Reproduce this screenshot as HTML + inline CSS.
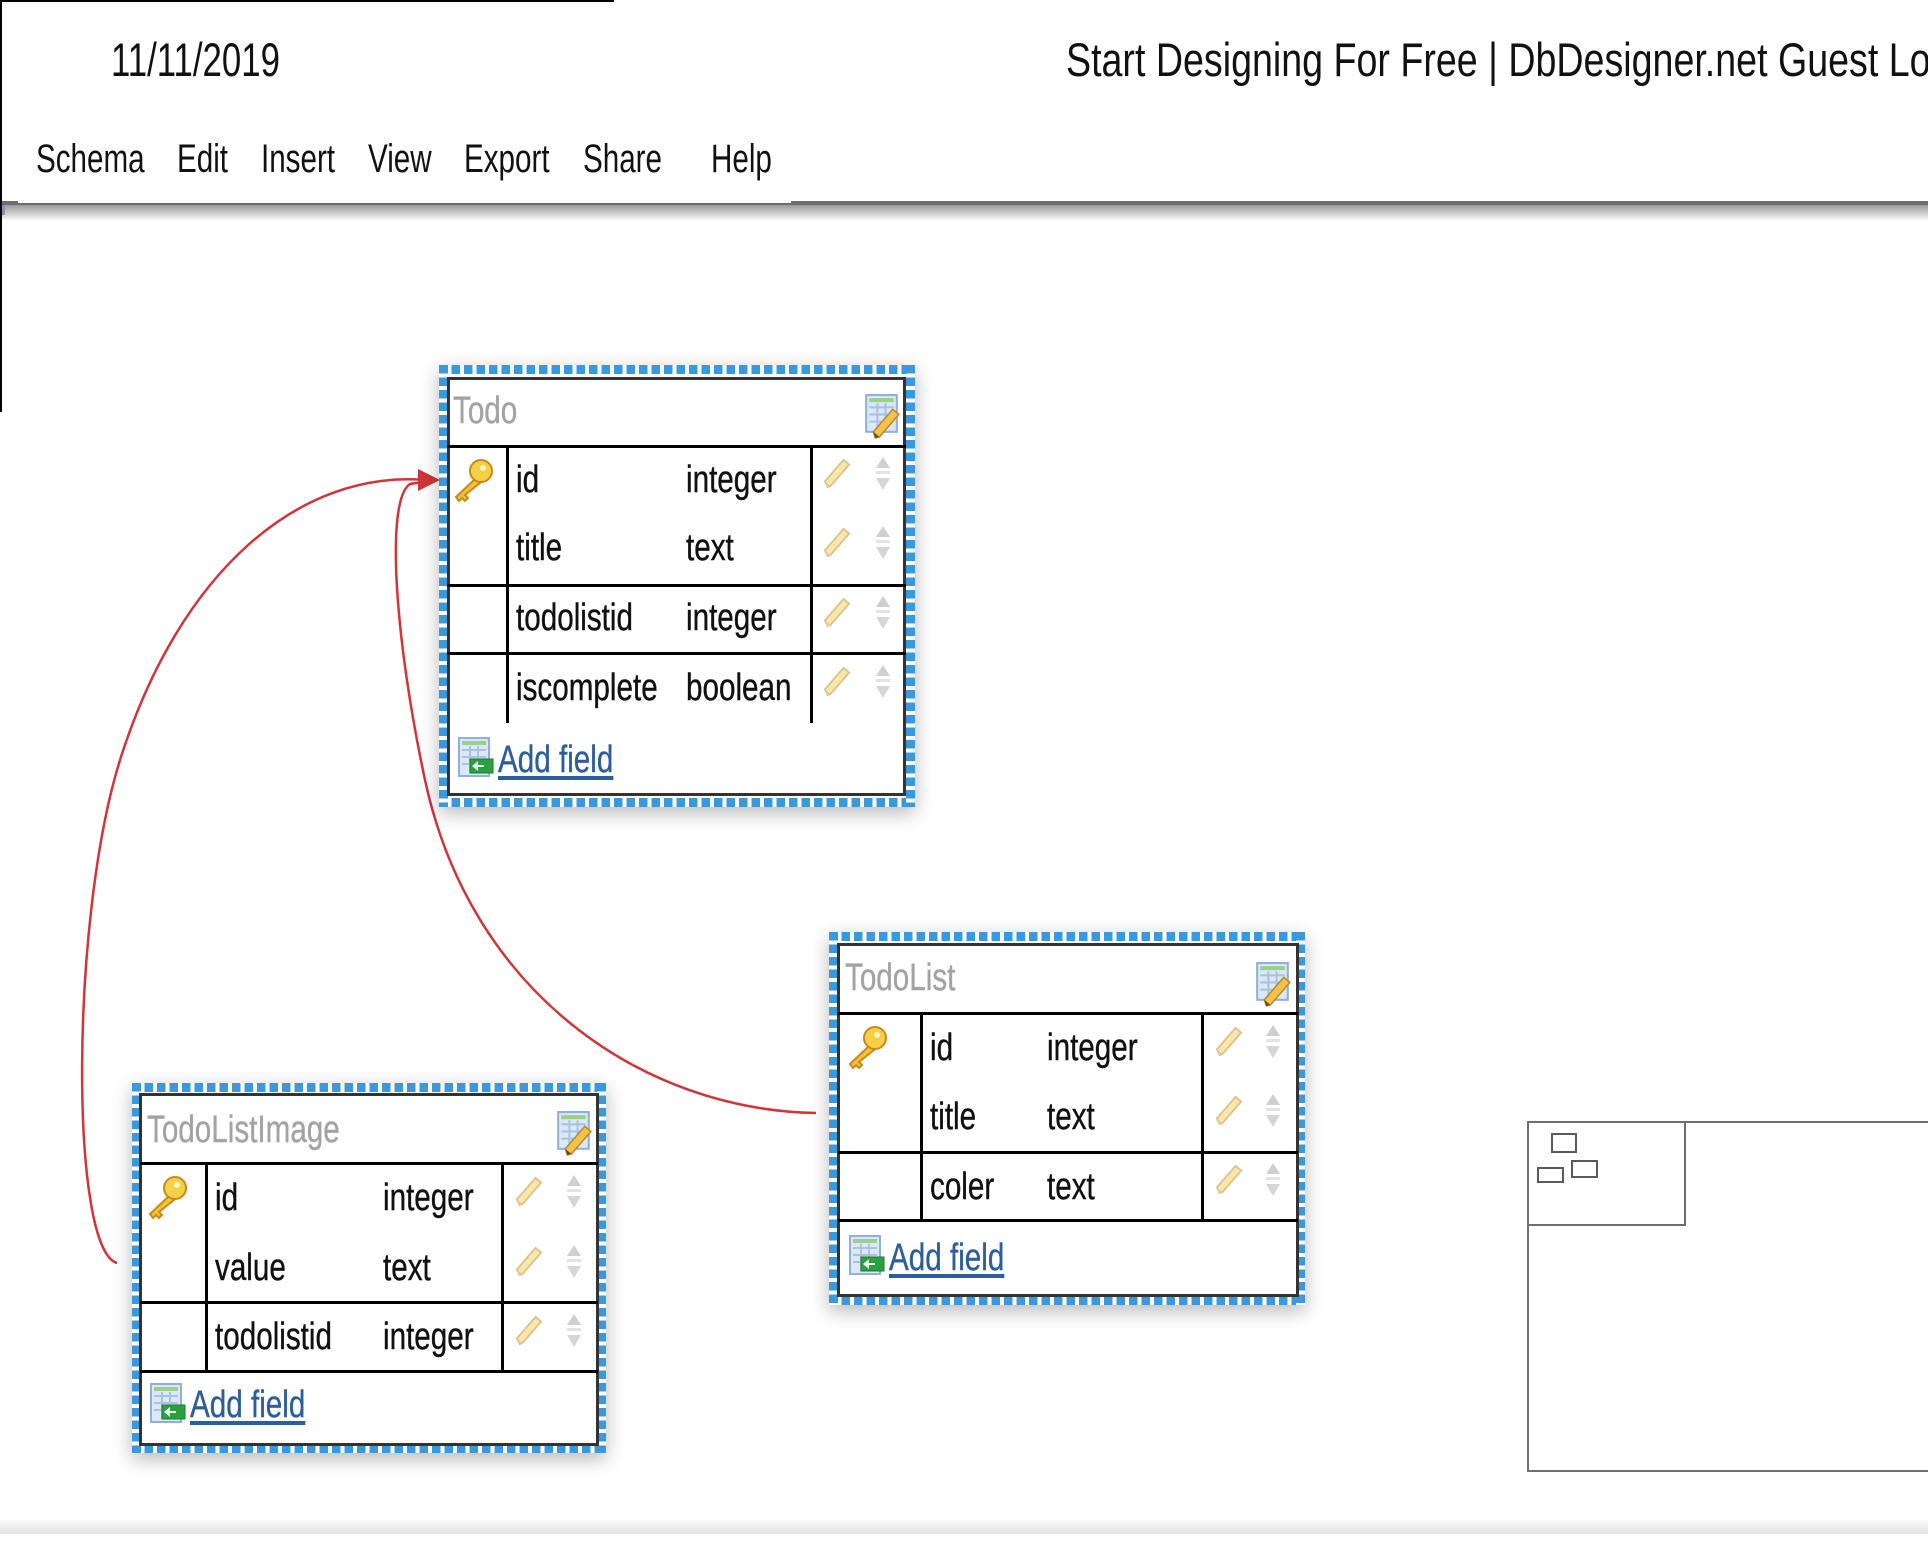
<!DOCTYPE html>
<html><head><meta charset="utf-8"><style>
*{margin:0;padding:0;box-sizing:border-box}
body{width:1928px;height:1552px;position:relative;overflow:hidden;background:#fff;font-family:"Liberation Sans",sans-serif}
.a{position:absolute}
.h{position:absolute;white-space:nowrap;color:#111;transform-origin:0 50%;transform:scaleX(.74)}
.t{position:absolute;white-space:nowrap;font-size:38px;line-height:60px;color:#111;transform-origin:0 50%;transform:scaleX(.78);-webkit-text-stroke:.4px #111}
.ti{color:#a3a3a3;-webkit-text-stroke:.4px #a3a3a3}
.af{color:#2d5e9c;-webkit-text-stroke:.4px #2d5e9c;text-decoration:underline;text-decoration-thickness:4px;text-underline-offset:4px}
.dash{position:absolute;box-shadow:0 6px 18px rgba(0,0,0,.28)}
.dash .s{position:absolute}
.inner{position:absolute;border:3px solid #333;background:#fff}
.ln{position:absolute;background:#000}
svg.i{position:absolute;overflow:visible}
</style></head><body>
<svg width="0" height="0" style="position:absolute">
<defs>
<symbol id="key" viewBox="0 0 40 50"><path d="M22 22 L3 40 L6 44 L9 41 L12 44 L15 41 L12 38 L27 26 Z" fill="#f1c232" stroke="#c98a1c" stroke-width="2"/><circle cx="28" cy="14" r="11" fill="#f5cf45" stroke="#c98a1c" stroke-width="2"/><circle cx="30" cy="11" r="3" fill="#fff6c8"/></symbol>
<symbol id="pen" viewBox="0 0 30 34"><path d="M5 32 L2 26 L22 3 L28 8 L8 31 Z" fill="#f8e7a8" stroke="#dcc38e" stroke-width="2"/><path d="M2 26 L5 32 L8 31" fill="#e9c8a0"/></symbol>
<symbol id="srt" viewBox="0 0 16 36"><path d="M8 1 L15 12 L1 12 Z" fill="#cfcfcf"/><rect x="1" y="15" width="14" height="3" fill="#e3e3e3"/><path d="M1 22 L15 22 L8 34 Z" fill="#d6d6d6"/></symbol>
<symbol id="ed" viewBox="0 0 34 46"><rect x="1" y="2" width="30" height="36" fill="#dbe8f7" stroke="#8fb0d8" stroke-width="2"/><rect x="4" y="5" width="24" height="4" fill="#9ccf8a"/><path d="M4 14 H28 M4 21 H28 M4 28 H28 M12 10 V36 M20 10 V36" stroke="#a9c2e2" stroke-width="2"/><path d="M10 44 L8 38 L27 16 L33 21 L14 43 Z" fill="#f2c24a" stroke="#b98a2c" stroke-width="1.5"/><path d="M8 38 L10 44 L14 43 Z" fill="#6b4a22"/></symbol>
<symbol id="add" viewBox="0 0 36 42"><rect x="1" y="1" width="30" height="38" fill="#dbe8f7" stroke="#8fb0d8" stroke-width="2"/><rect x="4" y="4" width="24" height="4" fill="#9ccf8a"/><path d="M4 13 H28 M4 20 H28 M4 27 H28 M12 9 V36 M20 9 V36" stroke="#a9c2e2" stroke-width="2"/><rect x="12" y="22" width="23" height="14" fill="#2aa040" stroke="#1d7a2e"/><path d="M14 29 L20 24 V34 Z M18 28 H26 V30 H18Z" fill="#e8ffe8"/></symbol>
</defs></svg>

<!-- header -->
<div class="a" style="left:0;top:201px;width:1928px;height:4px;background:#6e6e6e"></div>
<div class="a" style="left:0;top:205px;width:1928px;height:16px;background:linear-gradient(#9a9a9a,rgba(255,255,255,0))"></div>
<div class="a" style="left:18px;top:0;width:773px;height:203px;background:#fff"></div>
<div class="a" style="left:0;top:0;width:614px;height:2px;background:#000"></div>
<div class="a" style="left:0;top:0;width:2px;height:412px;background:#000"></div>
<div class="a" style="left:2px;top:205px;width:3px;height:10px;background:#8890b8"></div>
<div class="h" style="left:111px;top:36px;font-size:47px;line-height:47px">11/11/2019</div>
<div class="h" style="left:1066px;top:36px;font-size:47px;line-height:47px;transform:scaleX(.8)">Start Designing For Free | DbDesigner.net Guest Log</div>
<div class="h" style="left:36px;top:139px;font-size:40px;line-height:40px">Schema</div>
<div class="h" style="left:177px;top:139px;font-size:40px;line-height:40px">Edit</div>
<div class="h" style="left:261px;top:139px;font-size:40px;line-height:40px">Insert</div>
<div class="h" style="left:368px;top:139px;font-size:40px;line-height:40px">View</div>
<div class="h" style="left:464px;top:139px;font-size:40px;line-height:40px">Export</div>
<div class="h" style="left:583px;top:139px;font-size:40px;line-height:40px">Share</div>
<div class="h" style="left:711px;top:139px;font-size:40px;line-height:40px">Help</div>

<!-- relation lines -->
<svg class="a" style="left:0;top:0" width="1928" height="1552">
<path d="M117 1263 C70 1250 70 920 120 760 C180 570 300 470 425 480" fill="none" stroke="#d0353a" stroke-width="2.5"/>
<path d="M816 1113 C640 1110 470 990 425 780 C395 640 385 500 410 484 L428 481" fill="none" stroke="#d0353a" stroke-width="2.5"/>
<path d="M440 480 L418 469 L418 491 Z" fill="#d0353a"/>
</svg>

<!-- Todo -->
<div class="dash" style="left:439px;top:365px;width:476px;height:442px">
<div class="s" style="left:0;top:0;width:100%;height:9px;background:repeating-linear-gradient(90deg,#3a98dc 0 8.5px,#fff 8.5px 12.5px)"></div>
<div class="s" style="left:0;bottom:0;width:100%;height:9px;background:repeating-linear-gradient(90deg,#3a98dc 0 8.5px,#fff 8.5px 12.5px)"></div>
<div class="s" style="left:0;top:0;width:9px;height:100%;background:repeating-linear-gradient(180deg,#3a98dc 0 8.5px,#fff 8.5px 12.5px)"></div>
<div class="s" style="right:0;top:0;width:9px;height:100%;background:repeating-linear-gradient(180deg,#3a98dc 0 8.5px,#fff 8.5px 12.5px)"></div>
</div>
<div class="inner" style="left:447px;top:377px;width:459px;height:419px"></div>
<div class="ln" style="left:447px;top:445px;width:459px;height:3px"></div>
<div class="ln" style="left:506px;top:446px;width:3px;height:277px"></div>
<div class="ln" style="left:810px;top:446px;width:3px;height:277px"></div>
<div class="ln" style="left:447px;top:584px;width:459px;height:3px"></div>
<div class="ln" style="left:447px;top:652px;width:459px;height:3px"></div>
<div class="t ti" style="left:453px;top:381px">Todo</div>
<svg class="i" style="left:865px;top:393px" width="35" height="47"><use href="#ed"/></svg>
<svg class="i" style="left:453px;top:457px" width="40" height="50"><use href="#key"/></svg>
<div class="t" style="left:516px;top:450px">id</div><div class="t" style="left:686px;top:450px">integer</div>
<div class="t" style="left:516px;top:518px">title</div><div class="t" style="left:686px;top:518px">text</div>
<div class="t" style="left:516px;top:588px">todolistid</div><div class="t" style="left:686px;top:588px">integer</div>
<div class="t" style="left:516px;top:658px">iscomplete</div><div class="t" style="left:686px;top:658px">boolean</div>
<svg class="i" style="left:823px;top:456px" width="28" height="34"><use href="#pen"/></svg><svg class="i" style="left:875px;top:456px" width="16" height="36"><use href="#srt"/></svg>
<svg class="i" style="left:823px;top:525px" width="28" height="34"><use href="#pen"/></svg><svg class="i" style="left:875px;top:525px" width="16" height="36"><use href="#srt"/></svg>
<svg class="i" style="left:823px;top:595px" width="28" height="34"><use href="#pen"/></svg><svg class="i" style="left:875px;top:595px" width="16" height="36"><use href="#srt"/></svg>
<svg class="i" style="left:823px;top:664px" width="28" height="34"><use href="#pen"/></svg><svg class="i" style="left:875px;top:664px" width="16" height="36"><use href="#srt"/></svg>
<svg class="i" style="left:458px;top:737px" width="36" height="42"><use href="#add"/></svg>
<div class="t af" style="left:498px;top:730px">Add field</div>

<!-- TodoList -->
<div class="dash" style="left:829px;top:932px;width:476px;height:373px">
<div class="s" style="left:0;top:0;width:100%;height:9px;background:repeating-linear-gradient(90deg,#3a98dc 0 8.5px,#fff 8.5px 12.5px)"></div>
<div class="s" style="left:0;bottom:0;width:100%;height:9px;background:repeating-linear-gradient(90deg,#3a98dc 0 8.5px,#fff 8.5px 12.5px)"></div>
<div class="s" style="left:0;top:0;width:9px;height:100%;background:repeating-linear-gradient(180deg,#3a98dc 0 8.5px,#fff 8.5px 12.5px)"></div>
<div class="s" style="right:0;top:0;width:9px;height:100%;background:repeating-linear-gradient(180deg,#3a98dc 0 8.5px,#fff 8.5px 12.5px)"></div>
</div>
<div class="inner" style="left:837px;top:943px;width:462px;height:354px"></div>
<div class="ln" style="left:838px;top:1012px;width:460px;height:3px"></div>
<div class="ln" style="left:920px;top:1013px;width:3px;height:207px"></div>
<div class="ln" style="left:1201px;top:1013px;width:3px;height:207px"></div>
<div class="ln" style="left:838px;top:1151px;width:460px;height:3px"></div>
<div class="ln" style="left:838px;top:1219px;width:460px;height:3px"></div>
<div class="t ti" style="left:845px;top:948px">TodoList</div>
<svg class="i" style="left:1256px;top:961px" width="35" height="47"><use href="#ed"/></svg>
<svg class="i" style="left:847px;top:1024px" width="40" height="50"><use href="#key"/></svg>
<div class="t" style="left:930px;top:1018px">id</div><div class="t" style="left:1047px;top:1018px">integer</div>
<div class="t" style="left:930px;top:1087px">title</div><div class="t" style="left:1047px;top:1087px">text</div>
<div class="t" style="left:930px;top:1157px">coler</div><div class="t" style="left:1047px;top:1157px">text</div>
<svg class="i" style="left:1215px;top:1024px" width="28" height="34"><use href="#pen"/></svg><svg class="i" style="left:1265px;top:1024px" width="16" height="36"><use href="#srt"/></svg>
<svg class="i" style="left:1215px;top:1093px" width="28" height="34"><use href="#pen"/></svg><svg class="i" style="left:1265px;top:1093px" width="16" height="36"><use href="#srt"/></svg>
<svg class="i" style="left:1215px;top:1162px" width="28" height="34"><use href="#pen"/></svg><svg class="i" style="left:1265px;top:1162px" width="16" height="36"><use href="#srt"/></svg>
<svg class="i" style="left:849px;top:1235px" width="36" height="42"><use href="#add"/></svg>
<div class="t af" style="left:889px;top:1228px">Add field</div>

<!-- TodoListImage -->
<div class="dash" style="left:132px;top:1083px;width:474px;height:370px">
<div class="s" style="left:0;top:0;width:100%;height:9px;background:repeating-linear-gradient(90deg,#3a98dc 0 8.5px,#fff 8.5px 12.5px)"></div>
<div class="s" style="left:0;bottom:0;width:100%;height:9px;background:repeating-linear-gradient(90deg,#3a98dc 0 8.5px,#fff 8.5px 12.5px)"></div>
<div class="s" style="left:0;top:0;width:9px;height:100%;background:repeating-linear-gradient(180deg,#3a98dc 0 8.5px,#fff 8.5px 12.5px)"></div>
<div class="s" style="right:0;top:0;width:9px;height:100%;background:repeating-linear-gradient(180deg,#3a98dc 0 8.5px,#fff 8.5px 12.5px)"></div>
</div>
<div class="inner" style="left:139px;top:1093px;width:460px;height:353px"></div>
<div class="ln" style="left:140px;top:1162px;width:458px;height:3px"></div>
<div class="ln" style="left:205px;top:1163px;width:3px;height:208px"></div>
<div class="ln" style="left:501px;top:1163px;width:3px;height:208px"></div>
<div class="ln" style="left:140px;top:1301px;width:458px;height:3px"></div>
<div class="ln" style="left:140px;top:1370px;width:458px;height:3px"></div>
<div class="t ti" style="left:147px;top:1100px">TodoListImage</div>
<svg class="i" style="left:557px;top:1110px" width="35" height="47"><use href="#ed"/></svg>
<svg class="i" style="left:147px;top:1174px" width="40" height="50"><use href="#key"/></svg>
<div class="t" style="left:215px;top:1168px">id</div><div class="t" style="left:383px;top:1168px">integer</div>
<div class="t" style="left:215px;top:1238px">value</div><div class="t" style="left:383px;top:1238px">text</div>
<div class="t" style="left:215px;top:1307px">todolistid</div><div class="t" style="left:383px;top:1307px">integer</div>
<svg class="i" style="left:515px;top:1174px" width="28" height="34"><use href="#pen"/></svg><svg class="i" style="left:566px;top:1174px" width="16" height="36"><use href="#srt"/></svg>
<svg class="i" style="left:515px;top:1244px" width="28" height="34"><use href="#pen"/></svg><svg class="i" style="left:566px;top:1244px" width="16" height="36"><use href="#srt"/></svg>
<svg class="i" style="left:515px;top:1313px" width="28" height="34"><use href="#pen"/></svg><svg class="i" style="left:566px;top:1313px" width="16" height="36"><use href="#srt"/></svg>
<svg class="i" style="left:150px;top:1383px" width="36" height="42"><use href="#add"/></svg>
<div class="t af" style="left:190px;top:1375px">Add field</div>

<!-- minimap -->
<div class="a" style="left:1527px;top:1121px;width:420px;height:351px;border:2px solid #6e6e6e;border-right:none"></div>
<div class="a" style="left:1527px;top:1121px;width:159px;height:105px;border:2px solid #6e6e6e"></div>
<div class="a" style="left:1551px;top:1133px;width:26px;height:20px;border:2px solid #5a5a5a"></div>
<div class="a" style="left:1537px;top:1167px;width:27px;height:16px;border:2px solid #5a5a5a"></div>
<div class="a" style="left:1571px;top:1160px;width:27px;height:18px;border:2px solid #5a5a5a"></div>

<div class="a" style="left:0;top:1518px;width:1928px;height:16px;background:linear-gradient(rgba(255,255,255,0),#e2e2e2)"></div>
</body></html>
